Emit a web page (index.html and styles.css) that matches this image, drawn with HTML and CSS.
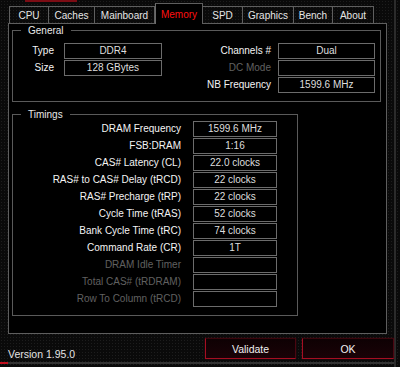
FILE: index.html
```html
<!DOCTYPE html>
<html lang="en">
<head>
    <meta charset="UTF-8">
    <title>CPU-Z Memory</title>
    <link rel="stylesheet" href="styles.css">
</head>
<body>
    <div class="app">
        <!-- Tabs -->
        <div class="tabs">
            <div class="tab tab-cpu">CPU</div>
            <div class="tab tab-caches">Caches</div>
            <div class="tab tab-mainboard">Mainboard</div>
            <div class="tab tab-memory active">Memory</div>
            <div class="tab tab-spd">SPD</div>
            <div class="tab tab-graphics">Graphics</div>
            <div class="tab tab-bench">Bench</div>
            <div class="tab tab-about">About</div>
        </div>

        <div class="panel">
            <!-- General -->
            <fieldset class="group general">
                <legend>General</legend>
                <div class="general-grid">
                    <span class="label">Type</span>
                    <div class="field">DDR4</div>
                    <span class="label">Channels #</span>
                    <div class="field">Dual</div>

                    <span class="label">Size</span>
                    <div class="field">128 GBytes</div>
                    <span class="label off">DC Mode</span>
                    <div class="field"></div>

                    <span></span>
                    <span></span>
                    <span class="label">NB Frequency</span>
                    <div class="field">1599.6 MHz</div>
                </div>
            </fieldset>

            <!-- Timings -->
            <fieldset class="group timings">
                <legend>Timings</legend>
                <div class="timings-grid">
                    <span class="label">DRAM Frequency</span>
                    <div class="field">1599.6 MHz</div>
                    <span class="label">FSB:DRAM</span>
                    <div class="field">1:16</div>
                    <span class="label">CAS# Latency (CL)</span>
                    <div class="field">22.0 clocks</div>
                    <span class="label">RAS# to CAS# Delay (tRCD)</span>
                    <div class="field">22 clocks</div>
                    <span class="label">RAS# Precharge (tRP)</span>
                    <div class="field">22 clocks</div>
                    <span class="label">Cycle Time (tRAS)</span>
                    <div class="field">52 clocks</div>
                    <span class="label">Bank Cycle Time (tRC)</span>
                    <div class="field">74 clocks</div>
                    <span class="label">Command Rate (CR)</span>
                    <div class="field">1T</div>
                    <span class="label off">DRAM Idle Timer</span>
                    <div class="field"></div>
                    <span class="label off">Total CAS# (tRDRAM)</span>
                    <div class="field"></div>
                    <span class="label off">Row To Column (tRCD)</span>
                    <div class="field"></div>
                </div>
            </fieldset>
        </div>

        <!-- Footer -->
        <div class="footer">
            <span class="version">Version 1.95.0</span>
            <button type="button" class="btn">Validate</button>
            <button type="button" class="btn">OK</button>
        </div>
        <div class="bottom-strip"></div>
    </div>
</body>
</html>
```

FILE: styles.css
```css
body {
    margin: 0;
    width: 400px;
    height: 367px;
    overflow: hidden;
    font-family: 'Liberation Sans', Arial, sans-serif;
    font-size: 10px;
    color: #f2f2f2;
    background:
        linear-gradient(#7c0c14, #7c0c14) 25px 0 / 52px 2px no-repeat,
        radial-gradient(circle, #1d1d1d 0.7px, transparent 1px) 0 0 / 3px 3px,
        #0a0a0a;
}
.app {
    width: 394px;
    height: 367px;
    border-right: 2px solid #2b2b2b;
    display: flex;
    flex-direction: column;
}

/* tabs */
.tabs {
    display: flex;
    align-items: flex-end;
    height: 20px;
    margin: 3px 0 0 9px;
}
.tab {
    height: 17px;
    line-height: 17px;
    text-align: center;
    box-sizing: border-box;
    border: 1px solid #5f5f5f;
    border-bottom: none;
    border-left: none;
    color: #e6e6e6;
}
.tab-cpu { width: 40px; border-left: 1px solid #5f5f5f; }
.tab-caches { width: 46px; }
.tab-mainboard { width: 60px; }
.tab-memory { width: 48px; }
.tab-spd { width: 40px; }
.tab-graphics { width: 51px; }
.tab-bench { width: 39px; }
.tab-about { width: 41px; }
.tab.active {
    height: 21px;
    margin-bottom: -1px;
    padding-top: 2px;
    line-height: 17px;
    background: #000;
    color: #ff1010;
    border-left: 1px solid #6a6a6a;
    position: relative;
    z-index: 1;
}

/* main panel */
.panel {
    margin-left: 8px;
    width: 379px;
    height: 311px;
    box-sizing: border-box;
    border: 1px solid #5e5e5e;
    background: #000;
    padding: 1px 5px 0 3px;
}
.group {
    margin: 0;
    padding: 0;
    border: 1px solid #5a5a5a;
    min-width: 0;
}
.group legend {
    margin-left: 8px;
    padding: 0 7px;
    line-height: 11px;
    color: #e8e8e8;
}
.general {
    padding: 7px 0 8px;
}
.general-grid {
    display: grid;
    grid-template-columns: 51px 98px 116px 97px;
    grid-auto-rows: 16px;
    row-gap: 1px;
}
.general-grid .label:nth-child(4n+1) { padding-right: 10px; }
.general-grid .label:nth-child(4n+3) { padding-right: 7px; }

.timings {
    width: 286px;
    box-sizing: border-box;
    margin-top: 7px;
    padding: 1px 0 8px;
}
.timings-grid {
    display: grid;
    grid-template-columns: 180px 84px;
    grid-auto-rows: 16px;
    row-gap: 1px;
}
.timings-grid .label { padding-right: 12px; }

.label {
    text-align: right;
    line-height: 16px;
    white-space: nowrap;
    color: #f4f4f4;
}
.label.off { color: #606060; }
.field {
    box-sizing: border-box;
    border: 1px solid #6c6c6c;
    text-align: center;
    line-height: 14px;
    color: #dedede;
}

/* footer */
.footer {
    display: flex;
    align-items: flex-start;
    gap: 6px;
    height: 21px;
    margin-top: 4px;
    padding-left: 8px;
}
.version {
    flex: 1;
    margin-top: 10px;
    color: #e4e4e4;
    font-size: 10.5px;
}
.btn {
    width: 91px;
    height: 21px;
    font-family: inherit;
    font-size: 10.5px;
    color: #f0f0f0;
    border: 1px solid #a50e22;
    border-top-color: #3a050c;
    border-right-color: #4a0610;
    background: linear-gradient(#0e0103, #1a0207);
    box-shadow: 0 0 1px #5a0812;
    padding: 0;
}
.btn:last-child { width: 92px; }
.bottom-strip {
    height: 2px;
    margin-top: 3px;
    background: linear-gradient(to right, #c0101e 0 8px, #333 8px);
}
```
